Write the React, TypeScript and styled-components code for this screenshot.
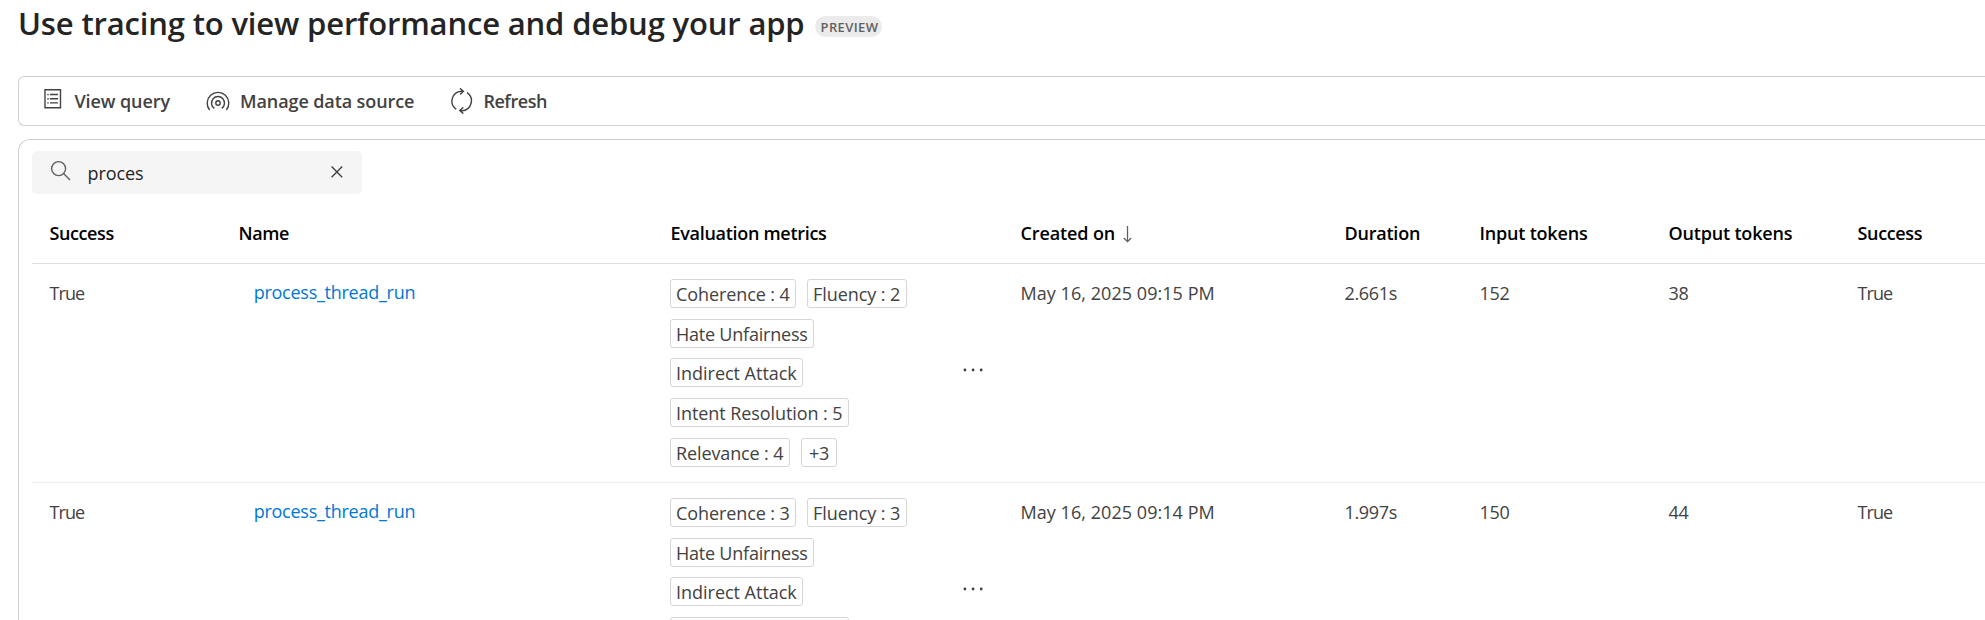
import React from 'react';
import styled, { createGlobalStyle } from 'styled-components';

const GlobalStyle = createGlobalStyle`
  * { box-sizing: border-box; }
  body {
    margin: 0;
    background: #fff;
    color: #424242;
    font-family: 'Open Sans', 'Noto Sans', sans-serif;
    font-size: 18px;
    line-height: 24px;
    overflow: hidden;
  }
`;

const Page = styled.main`
  height: 620px;
  padding-left: 18px;
  display: flex;
  flex-direction: column;
  overflow: hidden;
`;

const TitleBar = styled.header`
  display: flex;
  align-items: flex-start;
  height: 76px;
  flex: none;
`;

const Title = styled.h1`
  margin: 0;
  padding-top: 2px;
  width: 797px;
  flex: none;
  font-size: 31px;
  line-height: 42px;
  font-weight: 600;
  letter-spacing: -0.16px;
  color: #242424;
  white-space: nowrap;
`;

const Badge = styled.span`
  margin-top: 16px;
  width: 67px;
  height: 21px;
  border-radius: 11px;
  background: #ebebeb;
  color: #616161;
  font-size: 13px;
  line-height: 22px;
  font-weight: 600;
  letter-spacing: 0.4px;
  padding-left: 5.5px;
`;

const Toolbar = styled.nav`
  flex: none;
  height: 50px;
  border: 1px solid #d1d1d1;
  border-right: 0;
  border-radius: 6px 0 0 6px;
  display: flex;
  align-items: center;
  padding-left: 25px;
`;

const ToolButton = styled.button<{ $width: number; $gap: number; $spacing: number }>`
  flex: none;
  width: ${(p) => p.$width}px;
  display: flex;
  align-items: center;
  gap: ${(p) => p.$gap}px;
  border: 0;
  padding: 0;
  background: none;
  font: inherit;
  font-weight: 600;
  color: #424242;
  letter-spacing: ${(p) => p.$spacing}px;
  white-space: nowrap;
  text-align: left;

  svg { flex: none; }
`;

const Panel = styled.section`
  flex: 1;
  margin-top: 13px;
  border: 1px solid #d1d1d1;
  border-right: 0;
  border-bottom: 0;
  border-radius: 12px 0 0 0;
  padding: 11px 0 0 13px;
  overflow: hidden;
`;

const SearchBox = styled.div`
  width: 330px;
  height: 43px;
  border-radius: 5px;
  background: #f5f5f5;
  display: flex;
  align-items: center;
  padding: 0 18px 0 18px;
`;

const SearchText = styled.span`
  flex: 1;
  padding: 1px 0 0 15.5px;
  color: #242424;
  letter-spacing: -0.09px;
`;

const SearchIcon = styled.svg`
  flex: none;
  margin-top: -4px;
`;

const ClearIcon = styled.svg`
  flex: none;
  margin-top: -1px;
`;

const Grid = styled.div`
  display: grid;
  grid-template-columns: 189px 432px 350px 324px 135px 189px 189px 145px;
`;

const HeaderRow = styled(Grid)`
  height: 70px;
  border-bottom: 1px solid #e0e0e0;
  padding-top: 27px;
`;

const HeaderCell = styled.div<{ $spacing: number }>`
  display: flex;
  padding-left: 17.5px;
  font-weight: 600;
  color: #000;
  letter-spacing: ${(p) => p.$spacing}px;
  white-space: nowrap;
`;

const SortArrow = styled.svg`
  margin: 5px 0 0 7.5px;
`;

const BodyRow = styled(Grid)`
  height: 219px;
  border-bottom: 1px solid #f0f0f0;
`;

const Cell = styled.div<{ $spacing?: number }>`
  padding: 17px 0 0 17.5px;
  letter-spacing: ${(p) => p.$spacing ?? -0.29}px;
  white-space: nowrap;
`;

const NameCell = styled.div`
  padding: 16px 0 0 32.7px;
`;

const TraceLink = styled.a`
  color: #0078d4;
  letter-spacing: -0.26px;
  text-decoration: none;
`;

const MetricsCell = styled.div`
  display: flex;
  align-items: flex-start;
  justify-content: space-between;
  padding: 15px 20px 0 17px;
`;

const ChipList = styled.div`
  width: 262px;
  display: flex;
  flex-wrap: wrap;
  gap: 10.67px 11px;
`;

const Chip = styled.span<{ $width: number; $spacing: number; $inset?: number }>`
  width: ${(p) => p.$width}px;
  height: 29px;
  border: 1px solid #d6d6d6;
  border-radius: 3px;
  padding-left: ${(p) => p.$inset ?? 5}px;
  line-height: 28px;
  letter-spacing: ${(p) => p.$spacing}px;
  white-space: nowrap;
`;

const MoreButton = styled.button`
  border: 0;
  padding: 0;
  margin: 89px 0 0;
  background: none;
  display: flex;
`;

const QuerySvg = styled.svg`
  margin-top: -4px;
`;

const ViewQueryIcon = () => (
  <QuerySvg width="18" height="20" viewBox="0 0 18 20" fill="none" stroke="#424242">
    <path d="M1 .75h15.5v18H1z" strokeWidth="1.4" />
    <path d="M3.3 5.5h1.4M3.3 9.7h1.4M3.3 13.9h1.4M6 5.5h8M6 9.7h8M6 13.9h8" strokeWidth="1.4" />
  </QuerySvg>
);

const DataSourceIcon = () => (
  <svg width="24" height="20" viewBox="0 0 24 20" fill="none" stroke="#424242" strokeWidth="1.4">
    <circle cx="12" cy="12" r="2.2" />
    <path d="M8.3 17.4a6.5 6.5 0 1 1 7.4 0" />
    <path d="M3.6 19A10.8 10.8 0 1 1 20.4 19" />
  </svg>
);

const RefreshIcon = () => (
  <svg width="22" height="26" viewBox="0 0 22 26" fill="none" stroke="#424242" strokeWidth="1.4">
    <path d="M5.2 21.2A9.9 9.9 0 0 1 10.2 3.2h2.2M8.9 .3l3.5 3L9.1 6.6" />
    <path d="M16 4.6A9.9 9.9 0 0 1 11 22.7H8.8M12.3 19.3l-3.5 3.3 3.5 3" />
  </svg>
);

const MoreIcon = () => (
  <svg width="20" height="4" viewBox="0 0 20 4" fill="#424242">
    <circle cx="1.9" cy="2" r="1.4" />
    <circle cx="10.1" cy="2" r="1.4" />
    <circle cx="18.2" cy="2" r="1.4" />
  </svg>
);

type Metric = { label: string; width: number; spacing: number; inset?: number };
type Trace = { created: string; duration: string; input: string; output: string; metrics: Metric[] };

const metricsFor = (coherence: number, fluency: number): Metric[] => [
  { label: `Coherence : ${coherence}`, width: 126, spacing: -0.09 },
  { label: `Fluency : ${fluency}`, width: 100, spacing: -0.07 },
  { label: 'Hate Unfairness', width: 144, spacing: -0.22 },
  { label: 'Indirect Attack', width: 133, spacing: -0.02 },
  { label: 'Intent Resolution : 5', width: 179, spacing: -0.08 },
];

const traces: Trace[] = [
  {
    created: 'May 16, 2025 09:15 PM',
    duration: '2.661s',
    input: '152',
    output: '38',
    metrics: [
      ...metricsFor(4, 2),
      { label: 'Relevance : 4', width: 120, spacing: -0.12 },
      { label: '+3', width: 36, spacing: -0.29, inset: 7 },
    ],
  },
  { created: 'May 16, 2025 09:14 PM', duration: '1.997s', input: '150', output: '44', metrics: metricsFor(3, 3) },
];

export default function App() {
  return (
    <>
      <GlobalStyle />
      <Page>
        <TitleBar>
          <Title>Use tracing to view performance and debug your app</Title>
          <Badge>PREVIEW</Badge>
        </TitleBar>
        <Toolbar>
          <ToolButton $width={162} $gap={12.4} $spacing={-0.08}>
            <ViewQueryIcon />
            View query
          </ToolButton>
          <ToolButton $width={245} $gap={10} $spacing={-0.1}>
            <DataSourceIcon />
            Manage data source
          </ToolButton>
          <ToolButton $width={100} $gap={10.4} $spacing={-0.45}>
            <RefreshIcon />
            Refresh
          </ToolButton>
        </Toolbar>
        <Panel>
          <SearchBox>
            <SearchIcon width="22" height="22" viewBox="0 0 22 22" fill="none" stroke="#616161" strokeWidth="1.4">
              <circle cx="8.6" cy="8.6" r="7" />
              <path d="M13.6 13.6l6.4 6.4" />
            </SearchIcon>
            <SearchText>proces</SearchText>
            <ClearIcon width="14" height="14" viewBox="0 0 14 14" fill="none" stroke="#424242" strokeWidth="1.4">
              <path d="M1.6 1.6l10.6 10.6M12.2 1.6L1.6 12.2" />
            </ClearIcon>
          </SearchBox>
          <HeaderRow>
            <HeaderCell $spacing={-0.4}>Success</HeaderCell>
            <HeaderCell $spacing={-0.44}>Name</HeaderCell>
            <HeaderCell $spacing={-0.3}>Evaluation metrics</HeaderCell>
            <HeaderCell $spacing={-0.12}>
              Created on
              <SortArrow width="9" height="17" viewBox="0 0 9 17" fill="none" stroke="#616161" strokeWidth="1.3">
                <path d="M4.5 0v15.6M.8 12l3.7 3.7L8.2 12" />
              </SortArrow>
            </HeaderCell>
            <HeaderCell $spacing={-0.22}>Duration</HeaderCell>
            <HeaderCell $spacing={-0.2}>Input tokens</HeaderCell>
            <HeaderCell $spacing={-0.18}>Output tokens</HeaderCell>
            <HeaderCell $spacing={-0.35}>Success</HeaderCell>
          </HeaderRow>
          {traces.map((t) => (
            <BodyRow key={t.created}>
              <Cell $spacing={-0.9}>True</Cell>
              <NameCell>
                <TraceLink>process_thread_run</TraceLink>
              </NameCell>
              <MetricsCell>
                <ChipList>
                  {t.metrics.map((m) => (
                    <Chip key={m.label} $width={m.width} $spacing={m.spacing} $inset={m.inset}>
                      {m.label}
                    </Chip>
                  ))}
                </ChipList>
                <MoreButton aria-label="More">
                  <MoreIcon />
                </MoreButton>
              </MetricsCell>
              <Cell $spacing={0.05}>{t.created}</Cell>
              <Cell $spacing={-0.34}>{t.duration}</Cell>
              <Cell>{t.input}</Cell>
              <Cell>{t.output}</Cell>
              <Cell $spacing={-0.9}>True</Cell>
            </BodyRow>
          ))}
        </Panel>
      </Page>
    </>
  );
}
